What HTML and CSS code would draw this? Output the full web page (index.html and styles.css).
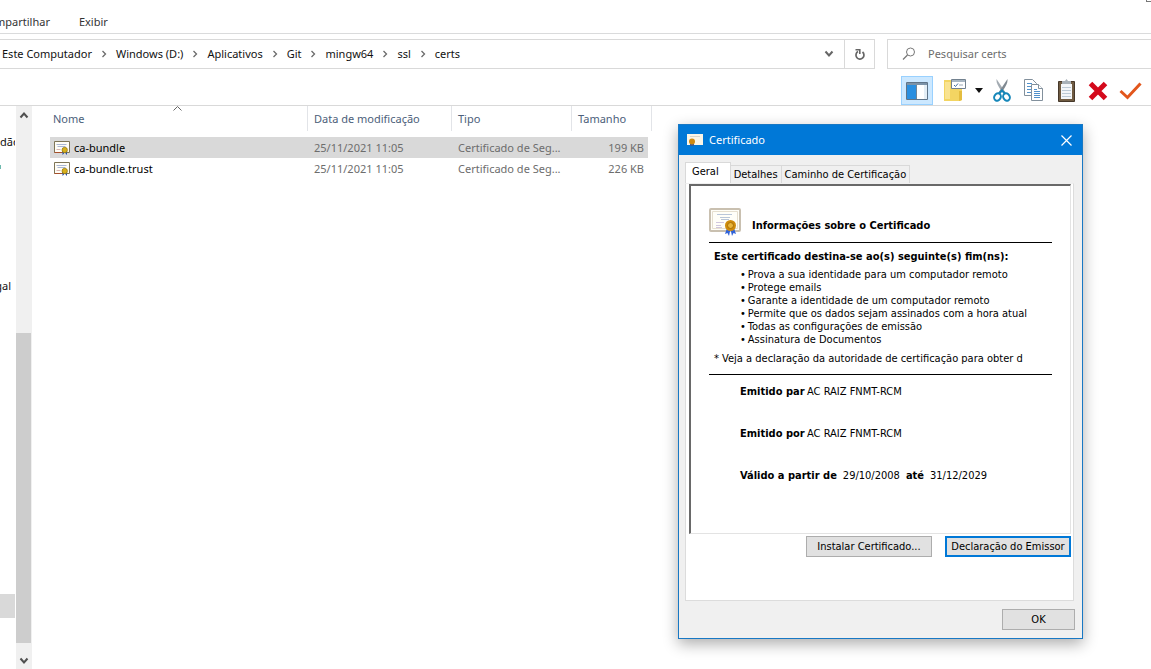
FILE: index.html
```html
<!DOCTYPE html>
<html lang="pt-BR">
<head>
<meta charset="utf-8">
<title>certs</title>
<link rel="stylesheet" href="styles.css">
</head>
<body>
<svg class="defs" aria-hidden="true">
  <symbol id="cert" viewBox="0 0 32 28">
    <rect x="1" y="1" width="30" height="22" rx="1" fill="#fffef8" stroke="#c9c0b0" stroke-width="2"/>
    <path d="M3.500 3.500h25v17h-25z" fill="none" stroke="#e6dfcf"/>
    <path d="M8 6.500h15M11 9.500h10M12 11.500h8" stroke="#b9c6d9"/>
    <path d="M7 14.500h8M7 17.500h5M7 19.500h6" stroke="#d0c6de"/>
    <path d="M18 20l-2 6 2.500-1L20 28l1.500-7zM25 20l2 6-2.500-1L23 28l-1.500-7z" fill="#2f62d8"/>
    <circle cx="21.500" cy="17.500" r="5.500" fill="#d08c0c"/>
    <circle cx="21.500" cy="17.500" r="3" fill="#e8b43a" stroke="#a86f05"/>
  </symbol>
  <symbol id="cert-small" viewBox="0 0 16 14">
    <path d="M.5.5h15v11H.5z" fill="#fffdf6" stroke="#7d7456"/>
    <path d="M2.500 3.500h10M3.500 5.500h8" stroke="#a9b6d3"/>
    <path d="M2.500 8.500h4" stroke="#d7b6b0"/>
    <path d="M.5 11.500h8" stroke="#a8502b"/>
    <path d="M8.500 10v4l1.500-1.500V10zM13 10v4l-1.500-1.500V10z" fill="#2b4fa0"/>
    <circle cx="10.700" cy="9" r="2.700" fill="#d8b01c" stroke="#8f7408" stroke-width=".7"/>
  </symbol>
  <symbol id="chev" viewBox="0 0 10 8">
    <path d="M1.500 1.500L5 5.500l3.500-4" fill="none" stroke="currentColor" stroke-width="2"/>
  </symbol>
  <symbol id="crumb" viewBox="0 0 6 8">
    <path d="M1.500 1L4.500 4l-3 3" fill="none" stroke="#6b6b6b" stroke-width="1.300"/>
  </symbol>
</svg>

<header class="explorer-top">
  <nav class="ribbon">
    <a class="ribbon-tab" href="#">mpartilhar</a>
    <a class="ribbon-tab" href="#">Exibir</a>
    <span class="ribbon-mark"></span>
  </nav>
  <div class="address-row">
    <nav class="address">
      <a href="#">Este Computador</a><svg class="sep"><use href="#crumb"/></svg>
      <a href="#">Windows (D:)</a><svg class="sep"><use href="#crumb"/></svg>
      <a href="#">Aplicativos</a><svg class="sep"><use href="#crumb"/></svg>
      <a href="#">Git</a><svg class="sep"><use href="#crumb"/></svg>
      <a href="#">mingw64</a><svg class="sep"><use href="#crumb"/></svg>
      <a href="#">ssl</a><svg class="sep"><use href="#crumb"/></svg>
      <a href="#">certs</a>
      <button class="icon-btn history" aria-label="Locais anteriores"><svg width="10" height="8"><use href="#chev"/></svg></button>
      <button class="icon-btn refresh" aria-label="Atualizar"><svg width="12" height="13" viewBox="0 0 12 13"><path d="M8.500 4A4 4 0 1 1 4 3.600" fill="none" stroke="#666" stroke-width="1.700"/><path d="M1.500 1.800H5.800V6" fill="none" stroke="#666" stroke-width="1.600"/></svg></button>
    </nav>
    <label class="search">
      <svg width="14" height="14" viewBox="0 0 14 14"><circle cx="8.500" cy="5" r="4" fill="none" stroke="#777"/><path d="M5.500 8L1 12.500" stroke="#777" stroke-width="1.200"/></svg>
      <input type="text" placeholder="Pesquisar certs" aria-label="Pesquisar certs">
    </label>
  </div>
  <div class="toolbar">
    <button class="tool active" aria-label="Painel de navegação"><svg width="22" height="18" viewBox="0 0 22 18"><path d="M.5.5h21v17H.5z" fill="#fff" stroke="#5f7488"/><path d="M1 1h20v2H1z" fill="#7c93a8"/><path d="M1 3h9v14H1z" fill="#2a8fe0"/><path d="M10.500 3v14" stroke="#6f8598"/><path d="M18 3h3v14h-3z" fill="#e4eef5"/></svg></button>
    <button class="tool" aria-label="Propriedades"><svg width="22" height="23" viewBox="0 0 22 23"><path d="M0 1h8v8h10v12l-2 1H0z" fill="#f3d562"/><path d="M1 3h5v17H1z" fill="#f9e391"/><path d="M15 12h3v9l-3 1z" fill="#e4bd3f"/><path d="M7.500.5h14v9h-14z" fill="#fff" stroke="#72818f"/><path d="M8 1h13v2H8z" fill="#a8b6c2"/><path d="M10 6l1.500 1.500L14 4.500" fill="none" stroke="#416b9d"/><path d="M15 6h4" stroke="#9aa8b5"/></svg></button>
    <button class="tool-arrow" aria-label="Mais opções"><svg width="8" height="5" viewBox="0 0 8 5"><path d="M0 0h8L4 5z" fill="#111"/></svg></button>
    <button class="tool" aria-label="Recortar"><svg width="18" height="23" viewBox="0 0 18 23"><path d="M3.500 0C3 4 6 9 11 15l1.500-1.500z" fill="#a3abb2"/><path d="M14.500 0C15 4 12 9 7 15l-1.500-1.500z" fill="#7f8991"/><g fill="none" stroke="#1687b9" stroke-width="2"><ellipse cx="4.500" cy="18" rx="3.200" ry="3.800" transform="rotate(30 4.500 18)"/><ellipse cx="13.500" cy="18" rx="3.200" ry="3.800" transform="rotate(-30 13.500 18)"/><path d="M6 14.500l3-3 3 3"/></g></svg></button>
    <button class="tool" aria-label="Copiar"><svg width="20" height="23" viewBox="0 0 20 23"><g fill="#fff" stroke="#82909c"><path d="M.5.500h8l4 4v12H.5z"/><path d="M7.500 5.500h7l4 4v12h-11z"/><path d="M14.500 5.500v4h4"/></g><path d="M3 4.500h5M3 7.500h4M3 10.500h4M3 13.500h4M10 10.500h3M10 12.500h6M10 14.500h6M10 16.500h6M10 18.500h6" stroke="#5191cb"/></svg></button>
    <button class="tool" aria-label="Colar"><svg width="17" height="23" viewBox="0 0 17 23"><path d="M.5 2.500h16v20H.5z" fill="#6f5b42" stroke="#46382a"/><path d="M3 5h11v15H3z" fill="#f3f6f9"/><path d="M4 8.500h9M4 11.500h9M4 14.500h9M4 17.500h9" stroke="#bccad6"/><path d="M4 2h3l1.500-2L10 2h3v3H4z" fill="#a8b1b8"/></svg></button>
    <button class="tool" aria-label="Excluir"><svg width="20" height="20" viewBox="0 0 20 20"><path d="M2.500 2.500l15 15M17.500 2.500l-15 15" stroke="#d40a1c" stroke-width="5"/></svg></button>
    <button class="tool" aria-label="Confirmar"><svg width="23" height="18" viewBox="0 0 23 18"><path d="M1.500 9l7 6.500L21.500 1.500" fill="none" stroke="#e2561c" stroke-width="3"/></svg></button>
  </div>
</header>

<main class="explorer-body">
  <aside class="tree">
    <div class="tree-item">dão</div>
    <div class="tree-item dot"><span></span></div>
    <div class="tree-item end">gal</div>
    <div class="tree-item selected"></div>
  </aside>
  <div class="scrollbar">
    <button class="scroll-btn" aria-label="Rolar para cima"><svg class="flip" width="10" height="8"><use href="#chev"/></svg></button>
    <div class="scroll-space"></div>
    <div class="scroll-thumb"></div>
    <button class="scroll-btn down" aria-label="Rolar para baixo"><svg width="10" height="8"><use href="#chev"/></svg></button>
  </div>
  <section class="files">
    <table class="file-table">
      <colgroup><col class="c-name"><col class="c-date"><col class="c-type"><col class="c-size"></colgroup>
      <thead><tr>
        <th>Nome<svg class="sort" width="9" height="5" viewBox="0 0 9 5"><path d="M.5 4.500l4-4 4 4" fill="none" stroke="#666"/></svg></th>
        <th>Data de modificação</th><th>Tipo</th><th>Tamanho</th>
      </tr></thead>
      <tbody>
        <tr class="selected"><td><span class="file"><svg width="16" height="14"><use href="#cert-small"/></svg>ca-bundle</span></td><td>25/11/2021 11:05</td><td>Certificado de Seg...</td><td>199 KB</td></tr>
        <tr><td><span class="file"><svg width="16" height="14"><use href="#cert-small"/></svg>ca-bundle.trust</span></td><td>25/11/2021 11:05</td><td>Certificado de Seg...</td><td>226 KB</td></tr>
      </tbody>
    </table>
  </section>
</main>

<section class="dialog" role="dialog" aria-labelledby="dlg-title">
  <header class="dialog-title">
    <svg width="16" height="14" viewBox="0 0 16 14"><path d="M0 1h16v11H0z" fill="#fbf5e6"/><path d="M3 3.500h10" stroke="#d8d5cc"/><path d="M3 9v4h4V9z" fill="#345a9c"/><circle cx="5" cy="8.500" r="3" fill="#d08a10"/></svg>
    <h1 id="dlg-title">Certificado</h1>
    <button class="close" aria-label="Fechar"><svg width="11" height="11" viewBox="0 0 11 11"><path d="M.5.500l10 10M10.500.500l-10 10" stroke="#fff" stroke-width="1.200"/></svg></button>
  </header>
  <div class="tabs" role="tablist">
    <button class="tab current" role="tab" aria-selected="true">Geral</button>
    <button class="tab" role="tab">Detalhes</button>
    <button class="tab" role="tab">Caminho de Certificação</button>
  </div>
  <div class="panel">
    <div class="sheet">
      <div class="sheet-head"><svg width="32" height="28"><use href="#cert"/></svg><h2>Informações sobre o Certificado</h2></div>
      <div class="purpose">
        <h3>Este certificado destina-se ao(s) seguinte(s) fim(ns):</h3>
        <ul>
          <li>Prova a sua identidade para um computador remoto</li>
          <li>Protege emails</li>
          <li>Garante a identidade de um computador remoto</li>
          <li>Permite que os dados sejam assinados com a hora atual</li>
          <li>Todas as configurações de emissão</li>
          <li>Assinatura de Documentos</li>
        </ul>
        <p>* Veja a declaração da autoridade de certificação para obter d</p>
      </div>
      <dl class="details">
        <div><dt>Emitido par</dt><dd>AC RAIZ FNMT-RCM</dd></div>
        <div><dt>Emitido por</dt><dd>AC RAIZ FNMT-RCM</dd></div>
      </dl>
      <p class="validity"><b>Válido a partir de</b><span>29/10/2008</span><b>até</b><span>31/12/2029</span></p>
    </div>
    <div class="actions">
      <button class="btn wide">Instalar Certificado...</button>
      <button class="btn wide focused">Declaração do Emissor</button>
    </div>
  </div>
  <footer class="dialog-foot"><button class="btn">OK</button></footer>
</section>
</body>
</html>
```
FILE: styles.css
```css
* { box-sizing: border-box; }
body {
  margin: 0;
  height: 100vh;
  display: flex;
  flex-direction: column;
  overflow: hidden;
  position: relative;
  background: #fff;
  color: #111;
  font: 11px/16px "Noto Sans", sans-serif;
}
a { color: inherit; text-decoration: none; }
h1, h2, h3, p, ul, dl, dd { margin: 0; padding: 0; }
button {
  margin: 0;
  padding: 0;
  border: 0;
  background: none;
  color: inherit;
  font: inherit;
}
svg { display: block; flex: none; }
.defs { position: absolute; width: 0; height: 0; }

.ribbon {
  display: flex;
  gap: 29px;
  height: 34px;
  margin-left: -5px;
  padding-top: 14px;
  border-bottom: 1px solid #dadbdc;
  color: #333;
  position: relative;
}
.ribbon-mark {
  position: absolute;
  right: 0;
  top: 0;
  width: 5px;
  height: 2px;
  border-left: 1px solid #777;
  border-bottom: 1px solid #777;
}
.address-row { display: flex; gap: 12px; padding-top: 5px; }
.address {
  flex: 1;
  display: flex;
  align-items: center;
  height: 30px;
  padding-left: 2px;
  border: 1px solid #d9d9d9;
  border-left: 0;
}
.sep { width: 6px; height: 8px; margin: 0 9px; }
.icon-btn {
  width: 30px;
  height: 28px;
  display: flex;
  align-items: center;
  justify-content: center;
  color: #666;
}
.history { margin-left: auto; }
.refresh { border-left: 1px solid #d9d9d9; }
.search {
  width: 264px;
  height: 30px;
  display: flex;
  align-items: center;
  gap: 12px;
  padding-left: 14px;
  border: 1px solid #d9d9d9;
  border-right: 0;
}
.search input {
  flex: 1;
  min-width: 0;
  padding: 0;
  border: 0;
  outline: 0;
  background: none;
  font: inherit;
}
.search input::placeholder { color: #6d6d6d; opacity: 1; }
.toolbar {
  display: flex;
  justify-content: flex-end;
  height: 37px;
  padding: 7px 5px 0 0;
  border-bottom: 1px solid #d9d9d9;
}
.tool, .tool-arrow {
  width: 32px;
  height: 29px;
  display: flex;
  align-items: center;
  justify-content: center;
}
.tool-arrow { width: 9px; }
.tool-arrow + .tool { margin-left: 3px; }
.tool.active + .tool { margin: 0 3px 0 6px; }
.tool.active { border: 1px solid #99d1ff; background: #cce8ff; }

.explorer-body { flex: 1; display: flex; min-height: 0; }
.tree { width: 15px; margin-right: 1px; padding-top: 28px; overflow: hidden; }
.tree-item { height: 17px; overflow: hidden; white-space: nowrap; }
.tree-item.dot { display: flex; height: 127px; padding-top: 14px; }
.tree-item.dot span { width: 1px; height: 4px; background: #6fb9ae; }
.tree-item.end { display: flex; justify-content: flex-end; margin-right: 4px; }
.tree-item.selected { height: 24px; margin-top: 299px; background: #d9d9d9; }
.scrollbar {
  width: 16px;
  display: flex;
  flex-direction: column;
  background: #f0f0f0;
  color: #505050;
}
.scroll-btn { height: 18px; display: flex; align-items: center; justify-content: center; }
.scroll-btn.down { height: 26px; padding-top: 9px; }
.flip { transform: rotate(180deg); }
.scroll-space { flex: 1; }
.scroll-thumb { height: 55%; margin-right: 1px; background: #cdcdcd; }
.files { flex: 1; padding-left: 18px; }
.file-table { width: 602px; table-layout: fixed; border-spacing: 0; }
.c-name { width: 258px; }
.c-date { width: 144px; }
.c-type { width: 120px; }
.c-size { width: 80px; }
th {
  position: relative;
  height: 25px;
  padding: 0 3px 0 6px;
  border-right: 1px solid #e2e4e8;
  color: #4c607a;
  font-weight: 400;
  text-align: left;
  white-space: nowrap;
}
th:first-child { padding-left: 3px; }
.sort { position: absolute; left: 123px; top: 0; }
tbody::before { content: ""; display: block; height: 6px; }
td {
  height: 21px;
  padding: 0 0 0 6px;
  color: #6d6d6d;
  white-space: nowrap;
}
td:first-child { padding-left: 4px; color: #000; }
td:last-child { border-right: 4px solid #fff; padding-right: 4px; text-align: right; }
.file { display: flex; align-items: center; gap: 4px; }
tr.selected td { background: #d9d9d9; }

.dialog {
  position: absolute;
  top: 124px;
  right: 68px;
  width: 405px;
  border: 1px solid #1878c4;
  background: #f0f0f0;
  color: #000;
  box-shadow: 0 5px 14px rgba(0, 0, 0, .32);
  font: 11px/13px "DejaVu Sans Condensed", "Noto Sans", sans-serif;
}
.dialog-title {
  display: flex;
  align-items: center;
  gap: 6px;
  height: 30px;
  padding: 0 10px 0 8px;
  background: #0078d7;
  color: #fff;
}
.dialog-title h1 { flex: 1; font: 11px/16px "Noto Sans", sans-serif; }
.tabs { display: flex; align-items: flex-end; height: 28px; padding: 7px 6px 0; }
.tab {
  height: 18px;
  padding: 0 3px;
  border: 1px solid #d9d9d9;
  border-left: 0;
  border-bottom: 0;
  white-space: nowrap;
}
.tab.current { height: 21px; padding: 0 11px 3px 6px; border-left: 1px solid #d9d9d9; background: #fff; }
.panel {
  margin: 0 8px 0 6px;
  padding: 0 2px 43px 3px;
  border: 1px solid #dcdcdc;
  border-top-color: #f0f0f0;
  background: #fff;
}
.sheet {
  height: 350px;
  padding: 22px 18px 0;
  border: 1px solid #e3e3e3;
  border-top: 2px solid #696969;
  border-left: 2px solid #696969;
}
.sheet-head { display: flex; gap: 11px; height: 35px; border-bottom: 1px solid #000; }
.sheet h2, .sheet h3 { font-size: 11px; line-height: 13px; font-weight: 700; white-space: nowrap; }
.sheet h2 { padding-top: 11px; }
.purpose { height: 132px; padding: 7px 0 0 5px; border-bottom: 1px solid #000; white-space: nowrap; }
.purpose ul { margin: 5px 0 6px; padding-left: 26px; }
.purpose li { list-style: none; }
.purpose li::before { content: "•"; margin-right: 2px; }
.details { padding: 10px 0 0 31px; white-space: nowrap; }
.details div { display: flex; margin-bottom: 29px; }
.details dt { width: 67px; font-weight: 700; }
.validity { display: flex; gap: 6px; padding-left: 31px; white-space: nowrap; }
.actions { display: flex; justify-content: flex-end; gap: 13px; padding-top: 2px; }
.btn {
  width: 73px;
  height: 21px;
  border: 1px solid #adadad;
  background: #e1e1e1;
  white-space: nowrap;
}
.btn.wide { width: 126px; }
.btn.focused { border: 2px solid #0078d7; }
.dialog-foot { display: flex; justify-content: flex-end; padding: 8px 7px; }
```
